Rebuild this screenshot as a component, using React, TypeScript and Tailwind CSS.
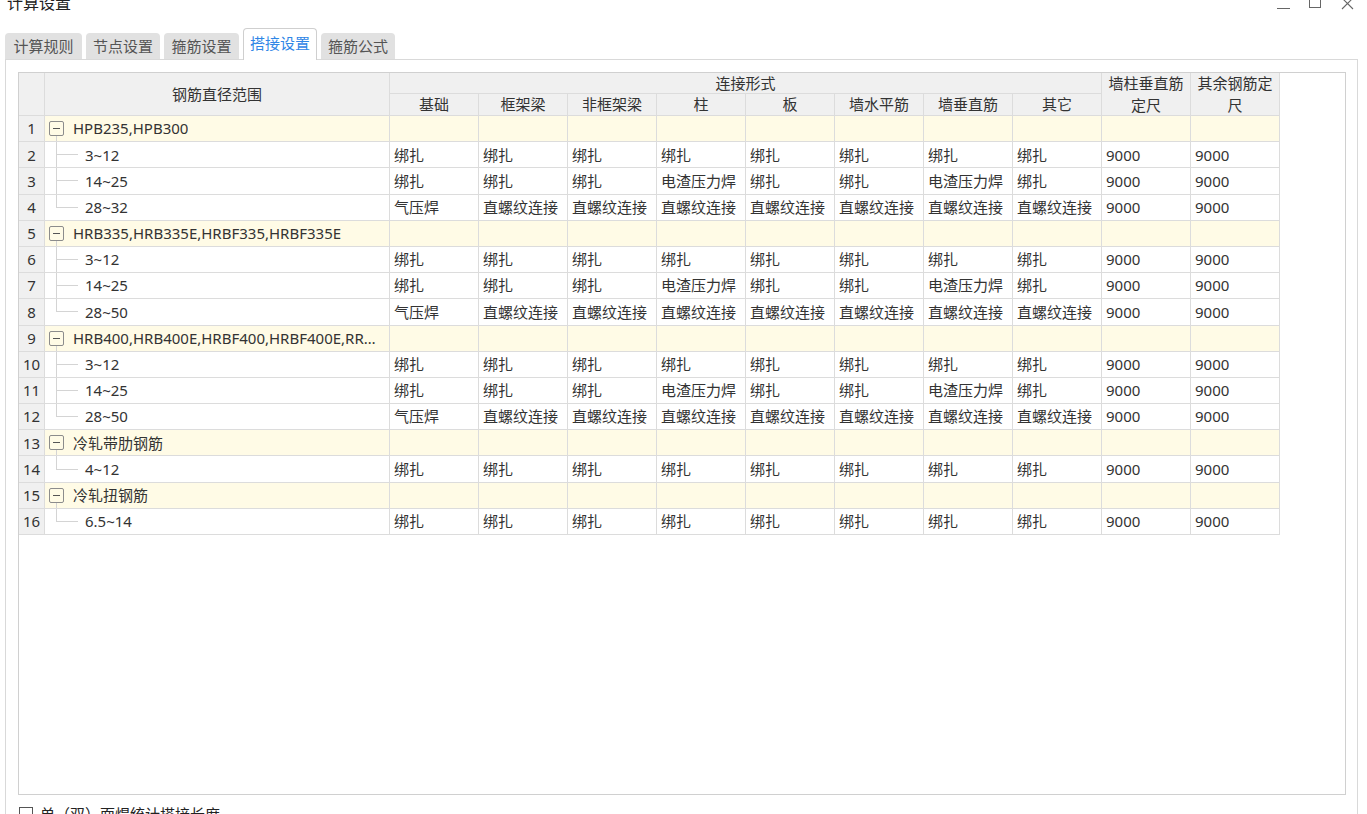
import React from 'react';

type Row =
    | { kind: 'group'; label: string }
    | { kind: 'item'; label: string; last: boolean; values: string[] };

const BIND = ['绑扎', '绑扎', '绑扎', '绑扎', '绑扎', '绑扎', '绑扎', '绑扎', '9000', '9000'];
const MID = ['绑扎', '绑扎', '绑扎', '电渣压力焊', '绑扎', '绑扎', '电渣压力焊', '绑扎', '9000', '9000'];
const BIG = ['气压焊', '直螺纹连接', '直螺纹连接', '直螺纹连接', '直螺纹连接', '直螺纹连接', '直螺纹连接', '直螺纹连接', '9000', '9000'];

const rows: Row[] = [
    { kind: 'group', label: 'HPB235,HPB300' },
    { kind: 'item', label: '3~12', last: false, values: BIND },
    { kind: 'item', label: '14~25', last: false, values: MID },
    { kind: 'item', label: '28~32', last: true, values: BIG },
    { kind: 'group', label: 'HRB335,HRB335E,HRBF335,HRBF335E' },
    { kind: 'item', label: '3~12', last: false, values: BIND },
    { kind: 'item', label: '14~25', last: false, values: MID },
    { kind: 'item', label: '28~50', last: true, values: BIG },
    { kind: 'group', label: 'HRB400,HRB400E,HRBF400,HRBF400E,RRB400' },
    { kind: 'item', label: '3~12', last: false, values: BIND },
    { kind: 'item', label: '14~25', last: false, values: MID },
    { kind: 'item', label: '28~50', last: true, values: BIG },
    { kind: 'group', label: '冷轧带肋钢筋' },
    { kind: 'item', label: '4~12', last: true, values: BIND },
    { kind: 'group', label: '冷轧扭钢筋' },
    { kind: 'item', label: '6.5~14', last: true, values: BIND },
];

const subHeaders = ['基础', '框架梁', '非框架梁', '柱', '板', '墙水平筋', '墙垂直筋', '其它'];
const tabs = [
    { label: '计算规则', w: 'w-[77px]' },
    { label: '节点设置', w: 'w-[74px]' },
    { label: '箍筋设置', w: 'w-[75px]' },
    { label: '搭接设置', w: 'w-[74px]', active: true },
    { label: '箍筋公式', w: 'w-[74px]' },
];

const cell = 'border-r border-b border-[#dcdcdc] flex items-center overflow-hidden whitespace-nowrap';
const head = 'border-r border-b border-[#dcdcdc] bg-[#f0f0f0] flex items-center justify-center';

export default function App() {
    return (
        <div
            className="h-[814px] w-[1367px] overflow-hidden bg-white text-[15px] text-[#333]"
            style={{ fontFamily: '"Noto Sans", "Noto Sans CJK SC", sans-serif' }}
        >
            {/* Title bar */}
            <div className="flex h-[28px] items-start">
                <div className="-mt-[9px] pl-[7px] text-[16px] text-[#222]">计算设置</div>
                <div className="ml-auto flex items-start">
                    <div className="mt-[8px] h-px w-[13px] bg-[#666]" />
                    <div className="-mt-[3px] ml-[19px] h-[11px] w-[12px] border border-[#666]" />
                    <svg className="ml-[18px] mr-[12px] h-[10px] w-[16px]" viewBox="0 0 16 10" fill="none" stroke="#666" strokeWidth="1.1">
                        <path d="M3 -2 L14 9 M14 -2 L3 9" />
                    </svg>
                </div>
            </div>

            {/* Tabs */}
            <div className="flex h-[31px] items-end gap-[4px] pl-[5px]">
                {tabs.map(tab =>
                    tab.active ? (
                        <div
                            key={tab.label}
                            className={`${tab.w} relative z-10 -mb-px flex h-[32px] items-center justify-center rounded-t-[4px] border border-b-0 border-[#cfcfcf] bg-white pb-[2px] text-[#2f86e6]`}
                        >
                            {tab.label}
                        </div>
                    ) : (
                        <div
                            key={tab.label}
                            className={`${tab.w} flex h-[26px] items-center justify-center rounded-t-[4px] bg-[#e1e1e1] text-[#555]`}
                        >
                            {tab.label}
                        </div>
                    )
                )}
            </div>

            {/* Panel */}
            <div className="ml-[5px] h-[800px] w-[1353px] border border-[#d9d9d9] pl-[12px] pt-[12px]">
                <div className="h-[723px] w-[1328px] border border-[#d0d0d0]">
                    <div className="grid grid-cols-[26px_345px_repeat(10,89px)] grid-rows-[21px_22px] auto-rows-[26.2px]">
                        {/* header */}
                        <div className={`${head} row-span-2`} />
                        <div className={`${head} row-span-2`}>钢筋直径范围</div>
                        <div className={`${head} col-span-8`}>连接形式</div>
                        <div className={`${head} row-span-2 flex-col leading-[22px]`}>
                            <span>墙柱垂直筋</span>
                            <span>定尺</span>
                        </div>
                        <div className={`${head} row-span-2 flex-col leading-[22px]`}>
                            <span>其余钢筋定</span>
                            <span>尺</span>
                        </div>
                        {subHeaders.map(h => (
                            <div key={h} className={head}>{h}</div>
                        ))}

                        {/* body */}
                        {rows.map((row, i) => (
                            <React.Fragment key={i}>
                                <div className={`${cell} justify-center bg-[#f0f0f0]`}>{i + 1}</div>
                                {row.kind === 'group' ? (
                                    <>
                                        <div className={`${cell} items-stretch bg-[#fffbe6] pl-[4px]`}>
                                            <div className="flex w-[15px] flex-col items-center">
                                                <div className="flex-1" />
                                                <div className="flex h-[15px] w-[15px] items-center justify-center rounded-[2px] border border-[#8c8c8c]">
                                                    <div className="h-px w-[7px] bg-[#555]" />
                                                </div>
                                                <div className="w-px flex-1 bg-[#d4d4d4]" />
                                            </div>
                                            <div className="ml-[9px] flex w-[310px] items-center">
                                                <span className="overflow-hidden text-ellipsis whitespace-nowrap">{row.label}</span>
                                            </div>
                                        </div>
                                        {Array.from({ length: 10 }).map((_, j) => (
                                            <div key={j} className={`${cell} bg-[#fffbe6]`} />
                                        ))}
                                    </>
                                ) : (
                                    <>
                                        <div className={`${cell} items-stretch pl-[11px]`}>
                                            <div className="flex w-[22px] flex-col">
                                                <div className="flex-1 border-b border-l border-[#d4d4d4]" />
                                                <div className={`flex-1 ${row.last ? '' : 'border-l border-[#d4d4d4]'}`} />
                                            </div>
                                            <div className="ml-[7px] flex items-center">{row.label}</div>
                                        </div>
                                        {row.values.map((v, j) => (
                                            <div key={j} className={`${cell} pl-[4px]`}>{v}</div>
                                        ))}
                                    </>
                                )}
                            </React.Fragment>
                        ))}
                    </div>
                </div>

                {/* Footer option */}
                <label className="mt-[8px] flex items-center gap-[7px] pl-px">
                    <span className="h-[14px] w-[14px] border border-[#555] bg-white" />
                    <span className="text-[#222]">单（双）面焊统计搭接长度</span>
                </label>
            </div>
        </div>
    );
}
